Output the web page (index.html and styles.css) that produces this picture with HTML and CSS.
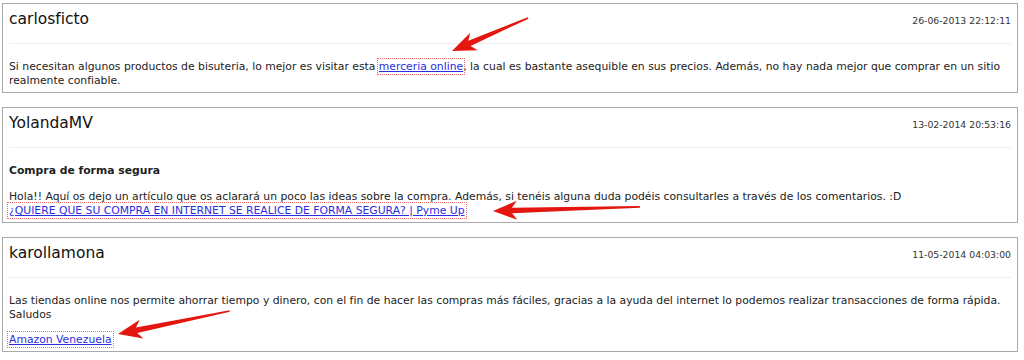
FILE: index.html
```html
<!DOCTYPE html>
<html lang="es">
<head>
  <meta charset="UTF-8" />
  <title>Comentarios</title>
  <link rel="stylesheet" href="styles.css">
</head>
<body>

  <div class="comments">

    <!-- comentario 1 -->
    <div class="comment">
      <div class="comment-head">
        <span class="name">carlosficto</span>
        <span class="date">26-06-2013 22:12:11</span>
      </div>
      <div class="comment-body">
        <p>Si necesitan algunos productos de bisuteria, lo mejor es visitar esta <a href="#" class="marked">merceria online</a>, la cual es bastante asequible en sus precios. Además, no hay nada mejor que comprar en un sitio<br>realmente confiable.</p>
      </div>
    </div>

    <!-- comentario 2 -->
    <div class="comment">
      <div class="comment-head">
        <span class="name">YolandaMV</span>
        <span class="date">13-02-2014 20:53:16</span>
      </div>
      <div class="comment-body">
        <h4>Compra de forma segura</h4>
        <p>Hola!! Aquí os dejo un artículo que os aclarará un poco las ideas sobre la compra. Además, si tenéis alguna duda podéis consultarles a través de los comentarios. :D<br>
        <a href="#" class="marked">¿QUIERE QUE SU COMPRA EN INTERNET SE REALICE DE FORMA SEGURA? | Pyme Up</a></p>
      </div>
    </div>

    <!-- comentario 3 -->
    <div class="comment">
      <div class="comment-head">
        <span class="name">karollamona</span>
        <span class="date">11-05-2014 04:03:00</span>
      </div>
      <div class="comment-body">
        <p>Las tiendas online nos permite ahorrar tiempo y dinero, con el fin de hacer las compras más fáciles, gracias a la ayuda del internet lo podemos realizar transacciones de forma rápida.<br>Saludos</p>
        <p class="link-line"><a href="#" class="marked">Amazon Venezuela</a></p>
      </div>
    </div>

  </div>

  <!-- flechas rojas encima -->
  <svg class="arrows" width="1024" height="360" viewBox="0 0 1024 360">
    <g transform="translate(452 51) rotate(156.5)">
      <polygon points="0,0 -24,-9.5 -19,-2.8 -83,-0.8 -83,0.8 -19,2.8 -24,9.5" />
    </g>
    <g transform="translate(493 211) rotate(178.4)">
      <polygon points="0,0 -24,-9.5 -19,-2.8 -147,-0.8 -147,0.8 -19,2.8 -24,9.5" />
    </g>
    <g transform="translate(118 334) rotate(168.4)">
      <polygon points="0,0 -24,-9.5 -19,-2.8 -114,-0.8 -114,0.8 -19,2.8 -24,9.5" />
    </g>
  </svg>

</body>
</html>
```

FILE: styles.css
```css
/* base */
* {
  box-sizing: border-box;
}
body {
  margin: 0;
  font-family: "DejaVu Sans", Verdana, sans-serif;
  font-size: 10.8px;
  color: #222;
  background: #fff;
  position: relative;
}

.comments {
  padding-top: 3px;
}

/* tarjeta de comentario */
.comment {
  border: 1px solid #aaa;
  margin: 0 6px 14px 2px;
  padding: 0 6px 4px;
}
.comment-head {
  display: flex;
  justify-content: space-between;
  align-items: baseline;
  padding: 3px 0 12px;
  border-bottom: 1px solid #eee;
}
.name {
  font-size: 15.5px;
  line-height: 24px;
  color: #111;
}
.date {
  font-size: 9.3px;
  color: #333;
}

.comment-body {
  padding-top: 16px;
}
.comment-body p {
  margin: 0;
  line-height: 14px;
}
.comment-body h4 {
  margin: 0 0 12px;
  font-size: 10.8px;
  line-height: 14px;
}
.comment-body .link-line {
  margin-top: 11px;
}

a {
  color: #2d2de0;
  text-decoration: underline;
}
a.marked {
  outline: 1px dotted #f26b6b;
  outline-offset: 1px;
}

/* flechas */
.arrows {
  position: absolute;
  top: 0;
  left: 0;
  pointer-events: none;
}
.arrows polygon {
  fill: #e3170f;
}
```
